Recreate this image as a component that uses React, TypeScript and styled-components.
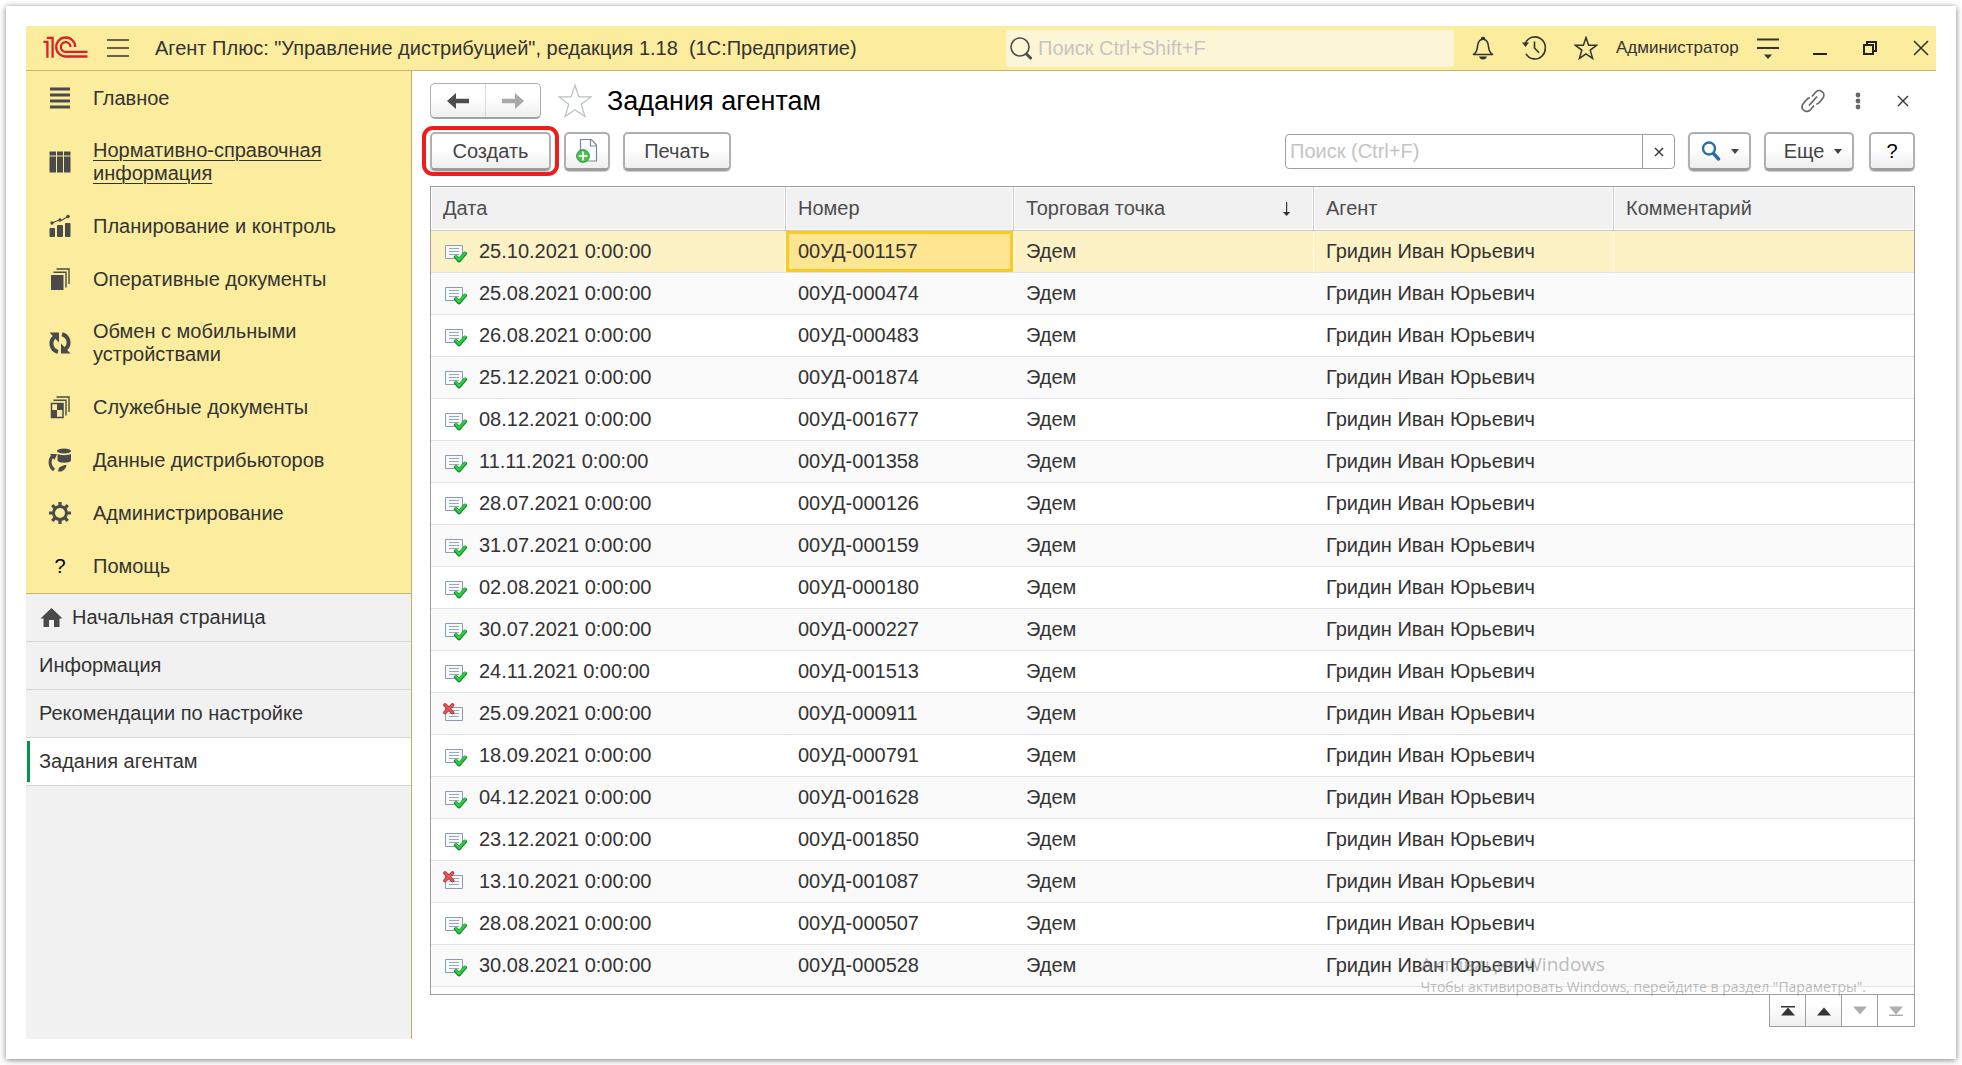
import React from "react";
import styled, { createGlobalStyle, css } from "styled-components";

const sans = `"Liberation Sans", Arial, sans-serif`;

const GlobalStyle = createGlobalStyle`
  *, *::before, *::after { box-sizing: border-box; }
  body { margin: 0; background: #fff; font-family: ${sans}; font-size: 20px; color: #333; }
  button, input { font: inherit; color: inherit; }
  button { cursor: pointer; }
  svg { display: block; flex: none; }
`;

const Page = styled.div`
  min-height: 100vh;
  padding: 6px;
  display: flex;
`;

const Sheet = styled.div`
  flex: 1;
  min-width: 0;
  padding: 20px;
  display: flex;
  background: #fff;
  box-shadow: 0 1px 6px rgba(0, 0, 0, 0.5);
`;

const AppWindow = styled.div`
  position: relative;
  flex: 1;
  min-width: 0;
  display: flex;
  flex-direction: column;
`;

/* ---------- title bar ---------- */

const TitleBar = styled.header`
  height: 45px;
  display: flex;
  align-items: center;
  background: #fbec9e;
  border-bottom: 1px solid #c5b668;
`;

const Brand = styled.div`
  flex: 1 1 980px;
  min-width: 0;
  display: flex;
  align-items: center;
  padding-left: 17px;
`;

const AppName = styled.span`
  white-space: pre;
  margin-left: 25px;
`;

const PlainButton = styled.button`
  display: flex;
  align-items: center;
  justify-content: center;
  padding: 0;
  border: 0;
  background: none;
  color: #333;
`;

const MenuButton = styled(PlainButton)`
  margin-left: 17px;
`;

const GlobalSearch = styled.label`
  flex: 0 1 448px;
  height: 37px;
  display: flex;
  align-items: center;
  gap: 6px;
  padding: 0 4px;
  border-radius: 3px;
  background: #fdf6d6;
`;

const SearchField = styled.input`
  flex: 1;
  min-width: 0;
  padding: 0;
  border: 0;
  outline: 0;
  background: none;
  &::placeholder { color: #c4c4c4; opacity: 1; }
`;

const TitleTools = styled.div`
  flex: 0 0 482px;
  display: flex;
  align-items: center;
  padding-left: 18px;
`;

const ToolGroup = styled.div<{ $gap: number; $before?: number }>`
  display: flex;
  align-items: center;
  gap: ${(p) => p.$gap}px;
  margin-left: ${(p) => p.$before ?? 0}px;
`;

const UserButton = styled(PlainButton)`
  font-size: 17px;
`;

/* ---------- body ---------- */

const Body = styled.div`
  flex: 1;
  display: flex;
  min-height: 0;
`;

const Sidebar = styled.aside`
  flex: 0 0 386px;
  display: flex;
  flex-direction: column;
  background: #f1f1f1;
  border-right: 1px solid #c0b060;
`;

const Sections = styled.nav`
  padding-top: 1px;
  background: #fbec9e;
  border-bottom: 1px solid #c5b668;
`;

const SectionLink = styled.a<{ $active?: boolean }>`
  min-height: 53px;
  padding: 14px 60px 15px 22px;
  display: grid;
  grid-template-columns: 24px 1fr;
  column-gap: 21px;
  align-items: center;
  line-height: 23px;
  color: #333;
  text-decoration: ${(p) => (p.$active ? "underline" : "none")};
  text-decoration-thickness: 1px;
  text-underline-offset: 3px;
`;

const HelpMark = styled.span`
  text-align: center;
  color: #000;
`;

const OpenTab = styled.a<{ $active?: boolean }>`
  height: 48px;
  padding: 0 13px;
  display: flex;
  align-items: center;
  gap: 9px;
  color: #333;
  text-decoration: none;
  border-bottom: 1px solid #d6d6d6;
  ${(p) =>
    p.$active &&
    css`
      padding-left: 1px;
      background: #fff;
      &::before {
        content: "";
        width: 3px;
        height: 41px;
        background: #009646;
      }
    `}
`;

const Main = styled.main`
  flex: 1;
  min-width: 0;
  display: flex;
  flex-direction: column;
  padding: 12px 21px 12px 18px;
`;

const FormHeader = styled.div`
  height: 36px;
  display: flex;
  align-items: center;
`;

const History = styled.div`
  display: flex;
  width: 111px;
  height: 36px;
  border: 1px solid #b0b0b0;
  border-bottom: 2px solid #a2a2a2;
  border-radius: 5px;
  background: linear-gradient(#fff 40%, #efefef);
`;

const HistoryButton = styled(PlainButton)<{ $dim?: boolean }>`
  flex: 1;
  color: ${(p) => (p.$dim ? "#a8a8a8" : "#4d4d4d")};
  & + & { border-left: 1px solid #dadada; }
`;

const StarButton = styled(PlainButton)`
  margin-left: 16px;
`;

const Title = styled.h1`
  flex: 1;
  margin: 0 0 0 14px;
  font-size: 27px;
  line-height: 36px;
  font-weight: 400;
  color: #000;
`;

const FormTools = styled.div`
  display: grid;
  grid-template-columns: repeat(3, 24px);
  justify-items: center;
  align-items: center;
  column-gap: 21px;
`;

const Toolbar = styled.div`
  display: flex;
  align-items: center;
  justify-content: space-between;
  margin: 13px 0 15px;
`;

const Button = styled.button<{ $width: number; $marked?: boolean; $menu?: boolean }>`
  position: relative;
  width: ${(p) => p.$width}px;
  height: 39px;
  padding: 0 0 0 ${(p) => (p.$menu ? 8 : 0)}px;
  display: flex;
  align-items: center;
  justify-content: center;
  gap: 10px;
  color: #444;
  border: 2px solid #b0b0b0;
  border-bottom: 3px solid #9c9c9c;
  border-radius: 5px;
  background: linear-gradient(#fff 45%, #eee);
  box-shadow: 0 1px 1px rgba(0, 0, 0, 0.2);
  ${(p) =>
    p.$marked &&
    css`
      &::after {
        content: "";
        position: absolute;
        inset: -8px -10px;
        border: 4px solid #ee1c1c;
        border-radius: 11px;
      }
    `}
`;

const HelpButton = styled(Button)`
  color: #000;
`;

const ListSearch = styled.div`
  width: 390px;
  height: 35px;
  display: flex;
  border: 1px solid #9f9f9f;
  border-radius: 4px;
  background: #fff;
  padding-left: 4px;
`;

const ClearButton = styled(PlainButton)`
  width: 32px;
  border-left: 1px solid #9f9f9f;
`;

/* ---------- list ---------- */

const ListBox = styled.div`
  flex: 1;
  border: 1px solid #9f9f9f;
`;

const Table = styled.table`
  width: 100%;
  table-layout: fixed;
  border-collapse: separate;
  border-spacing: 0;
`;

const Col = styled.col<{ $width?: number }>`
  width: ${(p) => (p.$width ? `${p.$width}px` : "auto")};
`;

const HeadCell = styled.th`
  height: 44px;
  padding: 0 22px 0 12px;
  text-align: left;
  font-weight: 400;
  color: #4d4d4d;
  background: #f1f1f1;
  border-bottom: 1px solid #c8c8c8;
  box-shadow: inset 0 0 0 1px #fff;
  &:not(:last-child) { border-right: 1px solid #c8c8c8; }
`;

const HeadLabel = styled.div`
  display: flex;
  align-items: center;
  justify-content: space-between;
`;

const Row = styled.tr<{ $selected?: boolean }>`
  &:nth-child(even) { background: #fafafa; }
  ${(p) =>
    p.$selected &&
    css`
      background: #fdf2c6;
      td:not(:last-child) { border-right: 1px solid #fef8e2; }
    `}
`;

const Cell = styled.td<{ $focused?: boolean }>`
  height: 42px;
  padding: 0 12px;
  white-space: nowrap;
  border-bottom: 1px solid #e3e3e3;
  ${(p) =>
    p.$focused &&
    css`
      background: #fde591;
      box-shadow: inset 0 0 0 3px #f9c926;
    `}
`;

const DateValue = styled.div`
  display: flex;
  align-items: center;
  gap: 12px;
`;

const Pager = styled.div`
  display: flex;
  align-self: flex-end;
  border: 1px solid #9f9f9f;
  border-top: 0;
`;

const PageButton = styled(PlainButton)<{ $dim?: boolean }>`
  width: 36px;
  height: 31px;
  color: ${(p) => (p.$dim ? "#adadad" : "#333")};
  background: ${(p) => (p.$dim ? "#fff" : "linear-gradient(#fff 30%, #efefef)")};
  &:not(:last-child) { border-right: 1px solid #9f9f9f; }
`;

const Watermark = styled.div`
  position: absolute;
  right: 70px;
  bottom: 42px;
  font-family: "Open Sans", "Noto Sans", sans-serif;
  color: rgba(130, 130, 130, 0.55);
  font-size: 14px;
  line-height: 20px;
  pointer-events: none;
`;

const WatermarkTitle = styled.div`
  font-size: 19px;
  line-height: 26px;
`;

/* ---------- icons ---------- */

const Logo = () => (
  <svg width="46" height="24" viewBox="0 0 46 24" fill="none" stroke="#dd1f26" strokeWidth="2.300">
    <path d="M0.500 5.800h3.900V21.800M3.800 1.800h5.800V21.800" />
    <path d="M32.200 11A9.500 9.500 0 1 0 22.700 20.500H44.500" />
    <path d="M27.500 11A4.800 4.800 0 1 0 22.700 15.800H44.500" />
  </svg>
);

const BurgerIcon = () => (
  <svg width="24" height="20" viewBox="0 0 24 20" stroke="#333" strokeWidth="1.500">
    <path d="M1 2h22M1 10h22M1 18h22" />
  </svg>
);

const LoupeIcon = () => (
  <svg width="22" height="24" viewBox="0 0 22 24" fill="none" stroke="#4d4d4d">
    <circle cx="10" cy="11" r="9" strokeWidth="1.600" />
    <path d="M16.500 18l4 4" strokeWidth="3" strokeLinecap="round" />
  </svg>
);

const BellIcon = () => (
  <svg width="22" height="24" viewBox="0 0 22 24" fill="none" stroke="#333" strokeWidth="1.600">
    <path d="M1.500 18.500c3-2 3.700-4.500 4-8C6 6 7.500 3.300 11 3.300s5 2.700 5.500 7.200c.3 3.500 1 6 4 8z" strokeLinejoin="round" />
    <path d="M9.500 3a1.500 1.500 0 0 1 3 0z" fill="#333" />
    <path d="M7 20.500h8c-.5 1.800-2 3-4 3s-3.500-1.200-4-3z" fill="#333" stroke="none" />
  </svg>
);

const RecentIcon = () => (
  <svg width="24" height="26" viewBox="0 0 24 26" fill="none" stroke="#333" strokeWidth="1.600">
    <path d="M3.300 8.500A10.500 11 0 1 1 4 18.800" />
    <path d="M0 7.500h7L3.500 12z" fill="#333" stroke="none" />
    <path d="M12.500 6.500V13l4.500 4.800" />
  </svg>
);

const StarIcon = ({ size, color, width }: { size: number; color: string; width: number }) => (
  <svg width={size} height={size} viewBox="0 0 24 24" fill="none" stroke={color} strokeWidth={width}>
    <path d="M12 1.500l2.600 7.800h8l-6.400 4.800 2.400 8.300L12 17.800l-6.600 4.600 2.400-8.300L1.400 9.300h8z" />
  </svg>
);

const SettingsIcon = () => (
  <svg width="22" height="24" viewBox="0 0 22 24" stroke="#333" strokeWidth="1.800">
    <path d="M0 3.500h22M0 12h22" />
    <path d="M7 18.500h8l-4 4.500z" fill="#333" stroke="none" />
  </svg>
);

const MinimizeIcon = () => (
  <svg width="14" height="16" viewBox="0 0 14 16" fill="#222">
    <path d="M0 13h14v2H0z" />
  </svg>
);

const RestoreIcon = () => (
  <svg width="14" height="14" viewBox="0 0 14 14" fill="none" stroke="#222" strokeWidth="2">
    <path d="M1 4h9v9H1z" />
    <path d="M4 4V1h9v9h-3" />
  </svg>
);

const CrossIcon = ({ size, width }: { size: number; width: number }) => (
  <svg width={size} height={size} viewBox={`0 0 ${size} ${size}`} stroke="#333" strokeWidth={width}>
    <path d={`M1 1L${size - 1} ${size - 1}M${size - 1} 1L1 ${size - 1}`} />
  </svg>
);

const ArrowIcon = ({ right }: { right?: boolean }) => (
  <svg width="22" height="16" viewBox="0 0 22 16" fill="currentColor">
    <path d={right ? "M22 8l-9-8v5.800H0v4.400h13V16z" : "M0 8l9-8v5.800h13v4.400H9V16z"} />
  </svg>
);

const LinkIcon = () => (
  <svg width="24" height="24" viewBox="0 0 24 24" fill="none" stroke="#666" strokeWidth="1.700">
    <path d="M11 7.500l3.300-4C16 1.300 18.800.900 21 2.600s2.500 4.400.8 6.600l-3.500 4.300c-.8 1-1.700 1.500-3 1.600" />
    <path d="M13 16.500l-3.300 4C8 22.700 5.200 23.100 3 21.400s-2.500-4.400-.8-6.600l3.500-4.300c.8-1 1.700-1.500 3-1.600" />
    <path d="M8 16.500l8-9" />
  </svg>
);

const DotsIcon = () => (
  <svg width="6" height="18" viewBox="0 0 6 18" fill="#666">
    <circle cx="3" cy="3" r="2.400" />
    <circle cx="3" cy="9" r="2.400" />
    <circle cx="3" cy="15" r="2.400" />
  </svg>
);

const CopyDocIcon = () => (
  <svg width="22" height="26" viewBox="0 0 22 26" fill="none">
    <path d="M4.500 1.500h11l5 5.500v16h-16z" fill="#fbfcfd" stroke="#7b8898" strokeWidth="1.200" />
    <path d="M14.500 1.500V8h6" stroke="#7b8898" strokeWidth="1.200" />
    <circle cx="7" cy="18" r="6.300" fill="#4fbf58" stroke="#1e9130" />
    <path d="M7 13.500v9M2.500 18h9" stroke="#fff" strokeWidth="1.600" />
  </svg>
);

const BlueLoupeIcon = () => (
  <svg width="20" height="20" viewBox="0 0 20 20" fill="none" stroke="#2a6ea6">
    <circle cx="8" cy="7.500" r="6" strokeWidth="2.400" />
    <path d="M12.500 12.500l5 5.500" strokeWidth="3.400" strokeLinecap="round" />
  </svg>
);

const CaretIcon = () => (
  <svg width="8" height="5" viewBox="0 0 8 5" fill="#444">
    <path d="M0 0h8L4 5z" />
  </svg>
);

const SortIcon = () => (
  <svg width="9" height="16" viewBox="0 0 9 16" fill="#333">
    <path d="M4 1h1.200v11H4z" />
    <path d="M1 11h7.200L4.600 15z" />
  </svg>
);

const RowIcon = ({ deleted }: { deleted?: boolean }) => (
  <svg width="24" height="22" viewBox="0 0 24 22" fill="none">
    <path d="M2.500 4.500h17v13h-17z" fill="#f7f9fb" stroke="#8d9bb0" />
    <path d="M6 7.500h10M6 10.500h10M6 13.500h10" stroke="#9aa7ba" />
    {deleted ? (
      <g strokeLinecap="round">
        <path d="M2 2l7.500 7.500M9.500 2L2 9.500" stroke="#b52a2a" strokeWidth="3.600" />
        <path d="M2 2l7.500 7.500M9.500 2L2 9.500" stroke="#ea5a5a" strokeWidth="1.800" />
      </g>
    ) : (
      <g strokeLinecap="round" strokeLinejoin="round">
        <path d="M13 16l3 3.500 6-7" stroke="#12892a" strokeWidth="4" />
        <path d="M13 15.500l3 3.500 6-7" stroke="#2fcf45" strokeWidth="2.200" />
      </g>
    )}
  </svg>
);

const PageIcon = ({ down, edge }: { down?: boolean; edge?: boolean }) => (
  <svg width="16" height="12" viewBox="0 0 16 12" fill="currentColor">
    <path d={down ? "M1 1.500h14L8 9.500z" : "M1 10.500h14L8 2.500z"} />
    {edge && <path d={down ? "M1 9.500h14v1.500H1z" : "M1 1h14v1.500H1z"} />}
  </svg>
);

const sectionGlyphs: Record<string, React.ReactNode> = {
  main: <path d="M2 1.500h20v3H2zM2 7.500h20v3H2zM2 13.500h20v3H2zM2 19.500h20v3H2z" />,
  catalog: (
    <path d="M1.500 1.500h6.500v4H1.500zM9 1.500h6v4H9zM16 1.500h6.500v4H16zM1.500 6.500h6.500v16H1.500zM9 6.500h6v16H9zM16 6.500h6.500v16H16z" />
  ),
  plan: (
    <>
      <rect x="1.500" y="14" width="5.500" height="9" rx="1" />
      <rect x="9" y="11" width="6" height="12" rx="1" />
      <rect x="17" y="9" width="5.500" height="14" rx="1" />
      <path d="M4 9l6-2.500 4-.5 6-3.500" fill="none" stroke="#4a4a4a" strokeWidth="1.200" />
      <circle cx="4" cy="9" r="1.700" />
      <circle cx="12" cy="6" r="1.700" />
      <circle cx="20" cy="2.500" r="1.800" />
    </>
  ),
  docs: (
    <>
      <path d="M3 8h12.500v15H3z" />
      <path d="M5.500 5.200h12.500V20.500M8.500 2h12.500v15" fill="none" stroke="#4a4a4a" strokeWidth="1.400" />
    </>
  ),
  service: (
    <>
      <path d="M3.500 8.500h11.500v14H3.500z" fill="none" stroke="#4a4a4a" strokeWidth="1.500" />
      <path d="M9 8.500h6V15H9zM3.500 15H9v7.500H3.500z" />
      <path d="M5.500 5.200h12.500V20.500M8.500 2h12.500v15" fill="none" stroke="#4a4a4a" strokeWidth="1.400" />
    </>
  ),
  sync: (
    <>
      <path d="M10 20.800A8.500 8.500 0 0 1 6.500 6M14 3.200a8.500 8.500 0 0 1 3.500 14.800" fill="none" stroke="#4a4a4a" strokeWidth="4" />
      <path d="M1.500 1.500H11V11.500zM22.500 22.500H13V12.500z" />
    </>
  ),
  data: (
    <>
      <ellipse cx="16" cy="3" rx="7" ry="2.500" />
      <path d="M9.500 6c2 1.500 11 1.500 13.500 0v6.500c-1 3-12.500 3-13.500 0z" />
      <path d="M6 22A9.500 9.500 0 0 1 4.500 8" fill="none" stroke="#4a4a4a" strokeWidth="3" />
      <path d="M2 6h7l-2.500 6zM10 23.500l1-4 5.500-2.500h2c-.5 3.500-2 5-5 6.500z" />
    </>
  ),
  admin: (
    <>
      <circle cx="12" cy="12" r="6.500" fill="none" stroke="#4a4a4a" strokeWidth="3" />
      <path
        d="M12 1v4M12 19v4M1 12h4M19 12h4M4.200 4.200l3 3M16.800 16.800l3 3M4.200 19.800l3-3M16.800 7.200l3-3"
        stroke="#4a4a4a"
        strokeWidth="3.200"
      />
    </>
  ),
};

const HomeIcon = () => (
  <svg width="24" height="22" viewBox="0 0 24 22" fill="#4a4a4a">
    <path d="M12.500 1l11 10.500h-3V20H15v-7h-5v7H4.500v-8.500h-3z" />
  </svg>
);

/* ---------- data ---------- */

const sections = [
  { id: "main", label: "Главное" },
  { id: "catalog", label: "Нормативно-справочная информация", active: true },
  { id: "plan", label: "Планирование и контроль" },
  { id: "docs", label: "Оперативные документы" },
  { id: "sync", label: "Обмен с мобильными устройствами" },
  { id: "service", label: "Служебные документы" },
  { id: "data", label: "Данные дистрибьюторов" },
  { id: "admin", label: "Администрирование" },
  { id: "help", label: "Помощь" },
];

const tasks: [string, string, boolean?][] = [
  ["25.10.2021 0:00:00", "00УД-001157"],
  ["25.08.2021 0:00:00", "00УД-000474"],
  ["26.08.2021 0:00:00", "00УД-000483"],
  ["25.12.2021 0:00:00", "00УД-001874"],
  ["08.12.2021 0:00:00", "00УД-001677"],
  ["11.11.2021 0:00:00", "00УД-001358"],
  ["28.07.2021 0:00:00", "00УД-000126"],
  ["31.07.2021 0:00:00", "00УД-000159"],
  ["02.08.2021 0:00:00", "00УД-000180"],
  ["30.07.2021 0:00:00", "00УД-000227"],
  ["24.11.2021 0:00:00", "00УД-001513"],
  ["25.09.2021 0:00:00", "00УД-000911", true],
  ["18.09.2021 0:00:00", "00УД-000791"],
  ["04.12.2021 0:00:00", "00УД-001628"],
  ["23.12.2021 0:00:00", "00УД-001850"],
  ["13.10.2021 0:00:00", "00УД-001087", true],
  ["28.08.2021 0:00:00", "00УД-000507"],
  ["30.08.2021 0:00:00", "00УД-000528"],
];

export default function App() {
  return (
    <>
      <GlobalStyle />
      <Page>
        <Sheet>
          <AppWindow>
            <TitleBar>
              <Brand>
                <Logo />
                <MenuButton aria-label="Меню"><BurgerIcon /></MenuButton>
                <AppName>{'Агент Плюс: "Управление дистрибуцией", редакция 1.18  (1С:Предприятие)'}</AppName>
              </Brand>
              <GlobalSearch>
                <LoupeIcon />
                <SearchField aria-label="Поиск" placeholder="Поиск Ctrl+Shift+F" />
              </GlobalSearch>
              <TitleTools>
                <ToolGroup $gap={28}>
                  <PlainButton aria-label="Уведомления"><BellIcon /></PlainButton>
                  <PlainButton aria-label="История"><RecentIcon /></PlainButton>
                  <PlainButton aria-label="Избранное"><StarIcon size={24} color="#333" width={1.5} /></PlainButton>
                </ToolGroup>
                <ToolGroup $gap={18} $before={18}>
                  <UserButton>Администратор</UserButton>
                  <PlainButton aria-label="Настройки"><SettingsIcon /></PlainButton>
                </ToolGroup>
                <ToolGroup $gap={36} $before={34}>
                  <PlainButton aria-label="Свернуть"><MinimizeIcon /></PlainButton>
                  <PlainButton aria-label="Восстановить"><RestoreIcon /></PlainButton>
                  <PlainButton aria-label="Закрыть"><CrossIcon size={16} width={1.6} /></PlainButton>
                </ToolGroup>
              </TitleTools>
            </TitleBar>

            <Body>
              <Sidebar>
                <Sections>
                  {sections.map((s) => (
                    <SectionLink key={s.id} href="#" $active={s.active}>
                      {s.id === "help" ? (
                        <HelpMark>?</HelpMark>
                      ) : (
                        <svg width="24" height="24" viewBox="0 0 24 24" fill="#4a4a4a">{sectionGlyphs[s.id]}</svg>
                      )}
                      {s.label}
                    </SectionLink>
                  ))}
                </Sections>
                <OpenTab href="#"><HomeIcon />Начальная страница</OpenTab>
                <OpenTab href="#">Информация</OpenTab>
                <OpenTab href="#">Рекомендации по настройке</OpenTab>
                <OpenTab href="#" $active>Задания агентам</OpenTab>
              </Sidebar>

              <Main>
                <FormHeader>
                  <History>
                    <HistoryButton aria-label="Назад"><ArrowIcon /></HistoryButton>
                    <HistoryButton aria-label="Вперед" $dim><ArrowIcon right /></HistoryButton>
                  </History>
                  <StarButton aria-label="В избранное"><StarIcon size={36} color="#b9c0c8" width={0.8} /></StarButton>
                  <Title>Задания агентам</Title>
                  <FormTools>
                    <PlainButton aria-label="Ссылка"><LinkIcon /></PlainButton>
                    <PlainButton aria-label="Действия"><DotsIcon /></PlainButton>
                    <PlainButton aria-label="Закрыть форму"><CrossIcon size={12} width={1.4} /></PlainButton>
                  </FormTools>
                </FormHeader>

                <Toolbar>
                  <ToolGroup $gap={13}>
                    <Button $width={121} $marked>Создать</Button>
                    <Button $width={46} aria-label="Скопировать"><CopyDocIcon /></Button>
                    <Button $width={108}>Печать</Button>
                  </ToolGroup>
                  <ToolGroup $gap={15}>
                    <ToolGroup $gap={13}>
                      <ListSearch>
                        <SearchField aria-label="Поиск в списке" placeholder="Поиск (Ctrl+F)" />
                        <ClearButton aria-label="Очистить"><CrossIcon size={10} width={1.4} /></ClearButton>
                      </ListSearch>
                      <Button $width={63} aria-label="Найти"><BlueLoupeIcon /><CaretIcon /></Button>
                      <Button $width={90} $menu>Еще<CaretIcon /></Button>
                    </ToolGroup>
                    <HelpButton $width={46}>?</HelpButton>
                  </ToolGroup>
                </Toolbar>

                <ListBox>
                  <Table>
                    <colgroup>
                      <Col $width={355} />
                      <Col $width={228} />
                      <Col $width={300} />
                      <Col $width={300} />
                      <Col />
                    </colgroup>
                    <thead>
                      <tr>
                        <HeadCell>Дата</HeadCell>
                        <HeadCell>Номер</HeadCell>
                        <HeadCell><HeadLabel>Торговая точка<SortIcon /></HeadLabel></HeadCell>
                        <HeadCell>Агент</HeadCell>
                        <HeadCell>Комментарий</HeadCell>
                      </tr>
                    </thead>
                    <tbody>
                      {tasks.map(([date, number, deleted], i) => (
                        <Row key={number} $selected={i === 0}>
                          <Cell><DateValue><RowIcon deleted={deleted} />{date}</DateValue></Cell>
                          <Cell $focused={i === 0}>{number}</Cell>
                          <Cell>Эдем</Cell>
                          <Cell>Гридин Иван Юрьевич</Cell>
                          <Cell />
                        </Row>
                      ))}
                    </tbody>
                  </Table>
                </ListBox>
                <Pager>
                  <PageButton aria-label="В начало"><PageIcon edge /></PageButton>
                  <PageButton aria-label="Вверх"><PageIcon /></PageButton>
                  <PageButton aria-label="Вниз" $dim><PageIcon down /></PageButton>
                  <PageButton aria-label="В конец" $dim><PageIcon down edge /></PageButton>
                </Pager>
              </Main>
            </Body>
            <Watermark>
              <WatermarkTitle>Активация Windows</WatermarkTitle>
              Чтобы активировать Windows, перейдите в раздел "Параметры".
            </Watermark>
          </AppWindow>
        </Sheet>
      </Page>
    </>
  );
}
